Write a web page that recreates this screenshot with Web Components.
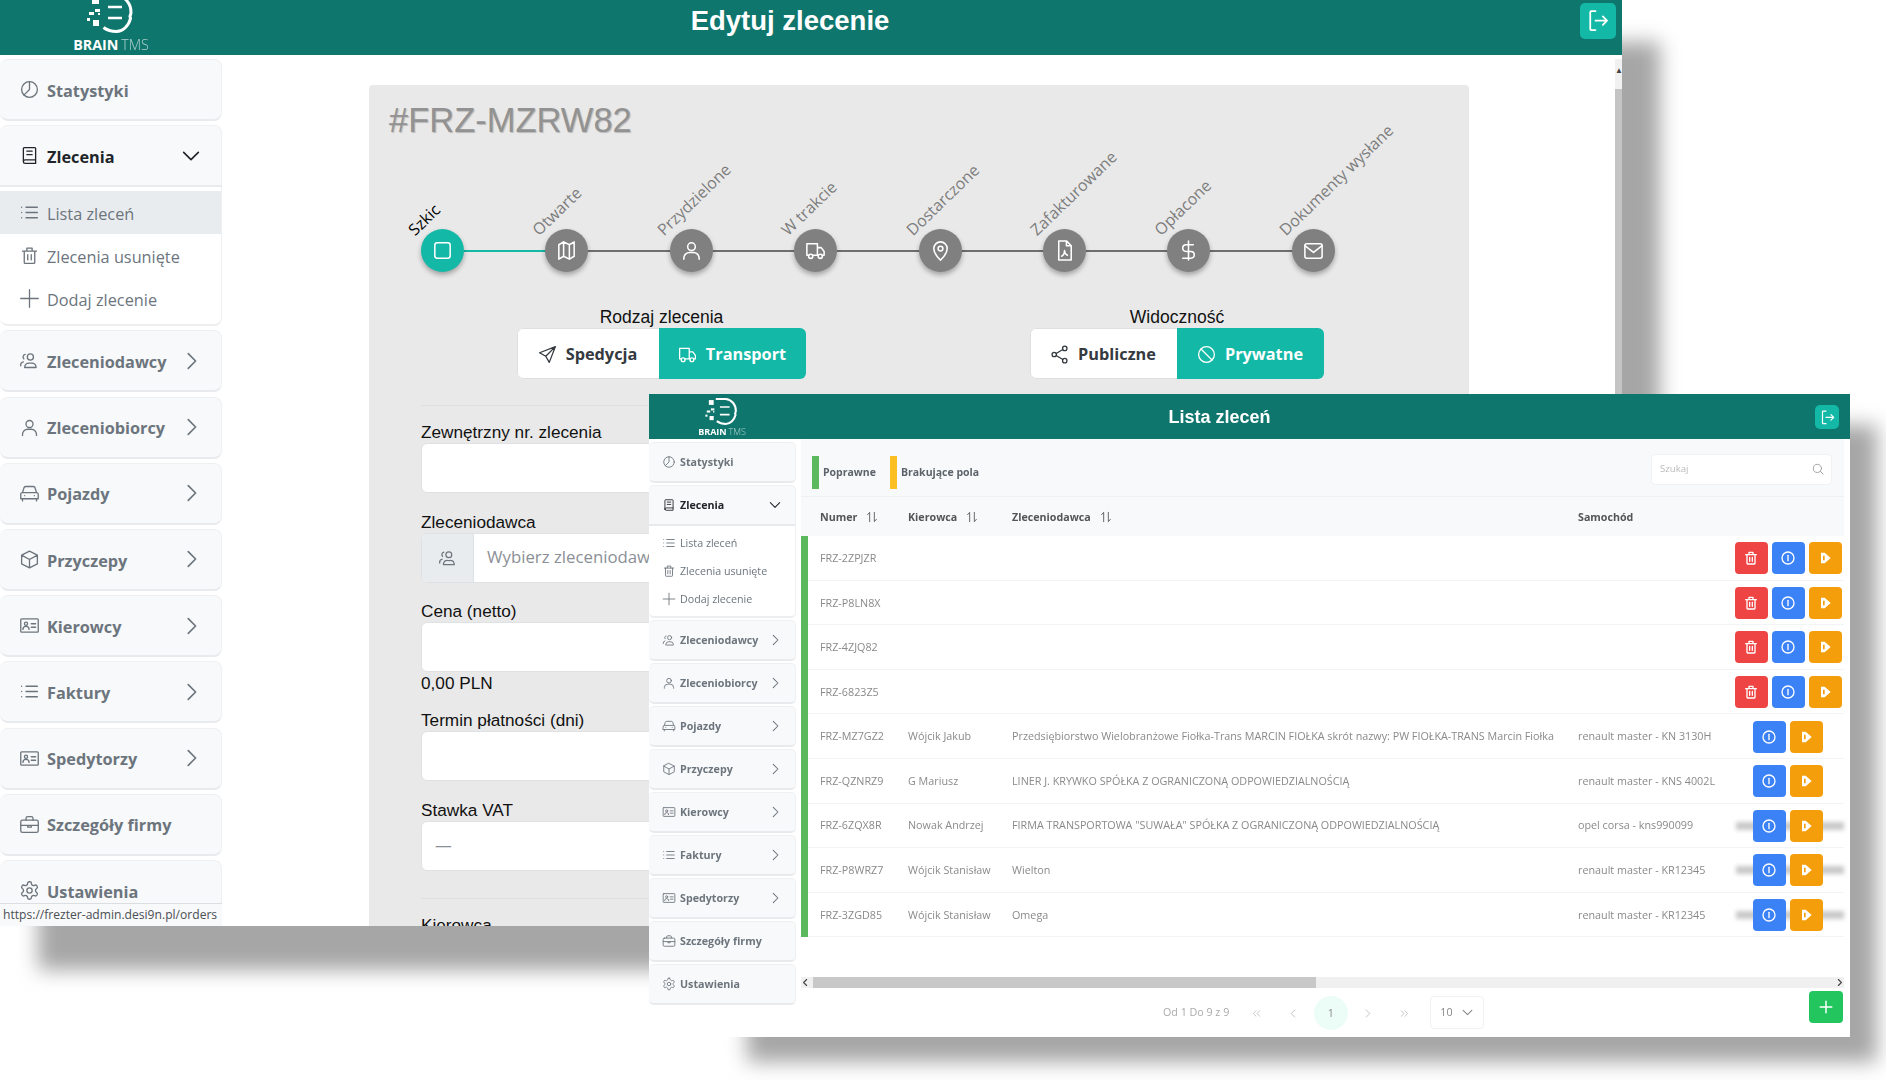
<!DOCTYPE html>
<html lang="pl">
<head>
<meta charset="utf-8">
<title>Brain TMS</title>
<style>
  html, body { margin: 0; padding: 0; background: #fff; }
  body { width: 1886px; height: 1080px; position: relative; overflow: hidden; font-family: "Liberation Sans", sans-serif; }
  #edit-win { left: 0; top: 0; width: 1622px; height: 926px; --shadow-l: 38px; --shadow-t: 42px; --shadow-r: -38px; --shadow-b: -44px;
    --bar-h: 55px; --btn-size: 36px; --btn-top: 3px; --btn-right: 6px; --title-size: 27.500px; --title-h: 42px; --title-gap: 148px;
    --logo-left: 74px; --logo-width: 74px; --logo-top: -6px; --svg-w: 48px; --svg-h: 39px; --logo-font: 14.300px; --logo-gap: 4px; }
  #list-win { left: 649px; top: 394px; width: 1201px; height: 643px; --shadow-l: 98px; --shadow-t: 31px; --shadow-r: -27px; --shadow-b: -25px;
    --bar-h: 45px; --btn-size: 24px; --btn-top: 11px; --btn-right: 11px; --title-size: 18px; --title-h: 46px; --title-gap: 122px;
    --logo-left: 49px; --logo-width: 48px; --logo-top: 4px; --svg-w: 34px; --svg-h: 27px; --logo-font: 9px; --logo-gap: 2px; }
  #edit-nav { --nav-w: 222px; --nav-top: 4px; --item-h: 62px; --item-gap: 4.200px; --sub-h: 43px; --nav-font: 16.300px; --nav-icon: 21px; --nav-left: 19px; --text-gap: 7px; --text-shift: 4px; --chev: 22px; --chev-right: 19px; --nav-radius: 8px; --sub-pad: 4px; --current-bg: #e9ecef; }
  #list-nav { --nav-w: 147px; --nav-top: 3px; --item-h: 41px; --item-gap: 2px; --sub-h: 28px; --nav-font: 10.700px; --nav-icon: 14px; --nav-left: 13px; --text-gap: 4px; --text-shift: 0px; --chev: 14px; --chev-right: 13px; --nav-radius: 5px; --sub-pad: 3px; --current-bg: transparent; }
</style>
</head>
<body>
<tms-window id="edit-win" heading="Edytuj zlecenie">
  <tms-sidebar id="edit-nav" status="https://frezter-admin.desi9n.pl/orders"></tms-sidebar>
  <tms-order-form></tms-order-form>
  <tms-pagescroll></tms-pagescroll>
</tms-window>

<tms-window id="list-win" heading="Lista zleceń" soft>
  <tms-sidebar id="list-nav"></tms-sidebar>
  <tms-order-list></tms-order-list>
</tms-window>

<script>
const ICONS = {
  pie: '<circle cx="12" cy="12" r="9"/><path d="M12 3v9l-6.400 6.400"/>',
  book: '<path d="M5 19V4a1 1 0 0 1 1-1h12a1 1 0 0 1 1 1v17H7a2 2 0 0 1-2-2zm0 0a2 2 0 0 1 2-2h12M9 7h6M9 11h6"/>',
  list: '<path d="M8 6h13M8 12h13M8 18h13M3 6h.01M3 12h.01M3 18h.01"/>',
  trash: '<path d="M4 7h16M9 7V3.500h6V7M6 7v13a1 1 0 0 0 1 1h10a1 1 0 0 0 1-1V7M10 11v6M14 11v6"/>',
  plus: '<path d="M12 2v20M2 12h20"/>',
  users: '<circle cx="13" cy="8" r="3.500"/><path d="M6.500 20v-.5a5 5 0 0 1 5-4.500h3a5 5 0 0 1 5 4.500v.5zM2 18a4 4 0 0 1 3-4.500M7 5a3 3 0 0 0-1.500 5"/>',
  user: '<circle cx="12" cy="8" r="4"/><path d="M4 21v-1a6 6 0 0 1 6-6h4a6 6 0 0 1 6 6v1"/>',
  car: '<path d="M4 11l1.500-5a2.500 2.500 0 0 1 2.400-2h8.200a2.500 2.500 0 0 1 2.400 2L20 11M2 13a2 2 0 0 1 2-2h16a2 2 0 0 1 2 2v5H2zM4 18v2.500M20 18v2.500M6.500 14.500h.01M17.500 14.500h.01"/>',
  box: '<path d="M12 2.500l9 4.500v10l-9 4.500L3 17V7zM3 7l9 5 9-5M12 12v9.500"/>',
  idcard: '<rect x="2" y="4.500" width="20" height="15" rx="1"/><circle cx="8" cy="10" r="1.800"/><path d="M4.500 16.500a3.500 3.500 0 0 1 7 0M14 10h5M14 14h5"/>',
  briefcase: '<rect x="2" y="7" width="20" height="14" rx="2"/><path d="M8 7V5a2 2 0 0 1 2-2h4a2 2 0 0 1 2 2v2M2 13h20M10 13v2h4v-2"/>',
  gear: '<path d="M12.220 2h-.44a2 2 0 0 0-2 2v.18a2 2 0 0 1-1 1.730l-.43.25a2 2 0 0 1-2 0l-.15-.08a2 2 0 0 0-2.730.73l-.22.38a2 2 0 0 0 .73 2.730l.15.1a2 2 0 0 1 1 1.720v.51a2 2 0 0 1-1 1.740l-.15.09a2 2 0 0 0-.73 2.730l.22.38a2 2 0 0 0 2.730.73l.15-.08a2 2 0 0 1 2 0l.43.25a2 2 0 0 1 1 1.730V20a2 2 0 0 0 2 2h.44a2 2 0 0 0 2-2v-.18a2 2 0 0 1 1-1.730l.43-.25a2 2 0 0 1 2 0l.15.08a2 2 0 0 0 2.730-.73l.22-.39a2 2 0 0 0-.73-2.730l-.15-.08a2 2 0 0 1-1-1.740v-.5a2 2 0 0 1 1-1.740l.15-.09a2 2 0 0 0 .73-2.730l-.22-.38a2 2 0 0 0-2.730-.73l-.15.08a2 2 0 0 1-2 0l-.43-.25a2 2 0 0 1-1-1.730V4a2 2 0 0 0-2-2z"/><circle cx="12" cy="12" r="3"/>',
  right: '<path d="M9 4l8 8-8 8"/>',
  down: '<path d="M4 8l8 8 8-8"/>',
  left: '<path d="M15 4l-8 8 8 8"/>',
  first: '<path d="M11 6l-6 6 6 6M19 6l-6 6 6 6"/>',
  last: '<path d="M5 6l6 6-6 6M13 6l6 6-6 6"/>',
  square: '<rect x="4" y="4" width="16" height="16" rx="2.500"/>',
  map: '<path d="M4 6l5-3 6 3 5-3v15l-5 3-6-3-5 3zM9 3v15M15 6v15"/>',
  truck: '<path d="M5 17H3V5h11v12H9M14 9h4l3 4v4h-2M14 17h1"/><circle cx="7" cy="18" r="2.200"/><circle cx="17" cy="18" r="2.200"/>',
  pin: '<path d="M12 22s7-6.500 7-12a7 7 0 1 0-14 0c0 5.500 7 12 7 12z"/><circle cx="12" cy="10" r="2.500"/>',
  filepdf: '<path d="M6 2h8l5 5v15H6zM14 2v5h5M9 18c2-1 3-4 3-6 0 2 1 4 3 5"/>',
  dollar: '<path d="M12 2v20M17 6H9.500a3.500 3.500 0 0 0 0 7h5a3.500 3.500 0 0 1 0 7H6"/>',
  mail: '<rect x="3" y="5" width="18" height="15" rx="2"/><path d="M3 7l9 7 9-7"/>',
  send: '<path d="M21 3L3 10l7 4 4 7zM10 14L21 3"/>',
  share: '<circle cx="18" cy="5" r="2.500"/><circle cx="6" cy="12" r="2.500"/><circle cx="18" cy="19" r="2.500"/><path d="M8.200 10.800l7.600-4.500M8.200 13.200l7.600 4.500"/>',
  ban: '<circle cx="12" cy="12" r="9"/><path d="M5.700 5.700l12.600 12.600"/>',
  logout: '<path d="M10 3H6a1 1 0 0 0-1 1v16a1 1 0 0 0 1 1h4M10 12h11M17 8l4 4-4 4"/>',
  search: '<circle cx="11" cy="11" r="7"/><path d="M21 21l-5-5"/>',
  info: '<circle cx="12" cy="12" r="9"/><path d="M12 8v8"/>',
  go: '<path fill="currentColor" stroke="none" fill-rule="evenodd" d="M6 4h5.500l9 8-9 8H6zM9 8.500v7h2.500v-7z"/>',
  sort: '<path d="M8 20V4L4.500 8M16 4v16l3.500-4"/>'
};

class TmsIcon extends HTMLElement {
  connectedCallback() {
    const name = this.getAttribute('name');
    const weight = this.getAttribute('weight') || '1.5';
    this.attachShadow({ mode: 'open' }).innerHTML = `
      <style>
        :host { display: inline-flex; width: var(--size, 18px); height: var(--size, 18px); flex: none; }
        svg { width: 100%; height: 100%; display: block; fill: none; stroke: currentColor; stroke-linecap: round; stroke-linejoin: round; }
      </style>
      <svg viewBox="0 0 24 24" stroke-width="${weight}">${ICONS[name] || ''}</svg>`;
  }
}
customElements.define('tms-icon', TmsIcon);

class TmsLogo extends HTMLElement {
  connectedCallback() {
    this.attachShadow({ mode: 'open' }).innerHTML = `
      <style>
        :host { display: flex; flex-direction: column; align-items: center; flex: none; width: var(--logo-width); margin: var(--logo-top) 0 0 var(--logo-left); color: #fff; }
        svg { width: var(--svg-w); height: var(--svg-h); display: block; }
        div { margin-top: var(--logo-gap); font: 700 var(--logo-font)/1.1 "Open Sans", sans-serif; white-space: nowrap; }
        span { font-weight: 300; opacity: .65; margin-left: .2em; }
      </style>
      <svg viewBox="0 0 48 39" fill="none" stroke="#fff">
        <path d="M15 1.500h14c9 .5 15 8 15 17 0 2-1 3-1 4 0 1 .5 1 .5 2-2 8-8 13-14 13-5 0-9-1-13-4" stroke-width="3"/>
        <path d="M21 13h14M21 24h14" stroke-width="2.400"/>
        <g fill="#fff" stroke="none">
          <rect x="5" y="3" width="7" height="7"/><rect x="8" y="15" width="5" height="3"/><rect x="2" y="18" width="5" height="3"/>
          <rect x="11" y="19" width="2" height="2"/><rect x="0" y="24" width="3" height="3"/><rect x="6" y="26" width="6" height="6"/>
        </g>
      </svg>
      <div>BRAIN<span>TMS</span></div>`;
  }
}
customElements.define('tms-logo', TmsLogo);

class TmsWindow extends HTMLElement {
  connectedCallback() {
    const heading = this.getAttribute('heading');
    const soft = this.hasAttribute('soft');
    this.attachShadow({ mode: 'open' }).innerHTML = `
      <style>
        :host { display: block; position: absolute; }
        .shade { position: absolute; left: var(--shadow-l); top: var(--shadow-t); right: var(--shadow-r); bottom: var(--shadow-b); background: #a6a6a6; filter: blur(10px); }
        .frame { position: relative; width: 100%; height: 100%; background: #fff; overflow: hidden; display: flex; flex-direction: column; ${soft ? 'filter: blur(.45px);' : ''} }
        header { flex: none; height: var(--bar-h); background: #0f766e; display: flex; align-items: flex-start; overflow: hidden; color: #fff; }
        h1 { flex: 1; margin: 0 var(--title-gap) 0 0; text-align: center; font: 700 var(--title-size)/var(--title-h) "Liberation Sans", sans-serif; }
        button { flex: none; width: var(--btn-size); height: var(--btn-size); margin: var(--btn-top) var(--btn-right) 0 0; padding: 0; border: 0; border-radius: 5px; background: #14b8a6; color: #fff; display: flex; align-items: center; justify-content: center; --size: 70%; }
        .body { flex: 1; min-height: 0; display: flex; position: relative; }
      </style>
      <div class="shade"></div>
      <div class="frame">
        <header>
          <tms-logo></tms-logo>
          <h1>${heading}</h1>
          <button><tms-icon name="logout" weight="1.700"></tms-icon></button>
        </header>
        <div class="body"><slot></slot></div>
      </div>`;
  }
}
customElements.define('tms-window', TmsWindow);

class TmsNavItem extends HTMLElement {
  connectedCallback() {
    const icon = this.getAttribute('icon');
    const label = this.getAttribute('label');
    const chevron = this.getAttribute('chevron');
    const open = chevron === 'down';
    this.attachShadow({ mode: 'open' }).innerHTML = `
      <style>
        :host { display: block; margin-bottom: var(--item-gap); }
        .item { box-sizing: border-box; height: var(--item-h); padding-left: var(--nav-left); display: flex; align-items: center; gap: var(--text-gap);
          background: #f8f9fa; border: 1px solid #eef0f2; border-bottom: 2px solid #e8eaed; border-left: 0; border-radius: var(--nav-radius);
          color: ${open ? '#212529' : '#6c757d'}; font: 700 var(--nav-font)/1.2 "Open Sans", sans-serif; --size: var(--nav-icon); white-space: nowrap; }
        :host([open]) .item { border-radius: var(--nav-radius) var(--nav-radius) 0 0; }
        .label { flex: 1; padding-top: var(--text-shift); }
        .chev { --size: var(--chev); margin-right: var(--chev-right); }
        .sub { background: #fff; border: 1px solid #eef0f2; border-top: 0; border-left: 0; border-bottom: 2px solid #eceef0; border-radius: 0 0 var(--nav-radius) var(--nav-radius); padding: var(--sub-pad) 0; }
        :host(:not([open])) .sub { display: none; }
      </style>
      <div class="item">
        <tms-icon name="${icon}"></tms-icon>
        <span class="label">${label}</span>
        ${chevron ? `<tms-icon class="chev" name="${chevron}" weight="1.800"></tms-icon>` : ''}
      </div>
      <div class="sub"><slot></slot></div>`;
  }
}
customElements.define('tms-nav-item', TmsNavItem);

class TmsNavSub extends HTMLElement {
  connectedCallback() {
    this.attachShadow({ mode: 'open' }).innerHTML = `
      <style>
        :host { display: flex; box-sizing: border-box; height: var(--sub-h); padding-left: var(--nav-left); align-items: center; gap: var(--text-gap); color: #6c757d; font: 400 var(--nav-font)/1.2 "Open Sans", sans-serif; --size: var(--nav-icon); white-space: nowrap; }
        :host([current]) { background: var(--current-bg); }
        span { padding-top: var(--text-shift); }
      </style>
      <tms-icon name="${this.getAttribute('icon')}"></tms-icon>
      <span>${this.getAttribute('label')}</span>`;
  }
}
customElements.define('tms-nav-sub', TmsNavSub);

class TmsSidebar extends HTMLElement {
  connectedCallback() {
    const status = this.getAttribute('status');
    const items = [
      ['pie', 'Statystyki', ''], ['users', 'Zleceniodawcy', 'right'], ['user', 'Zleceniobiorcy', 'right'],
      ['car', 'Pojazdy', 'right'], ['box', 'Przyczepy', 'right'], ['idcard', 'Kierowcy', 'right'],
      ['list', 'Faktury', 'right'], ['idcard', 'Spedytorzy', 'right'], ['briefcase', 'Szczegóły firmy', ''], ['gear', 'Ustawienia', '']
    ];
    const row = ([icon, label, chevron]) => `<tms-nav-item icon="${icon}" label="${label}" ${chevron ? `chevron="${chevron}"` : ''}></tms-nav-item>`;
    this.attachShadow({ mode: 'open' }).innerHTML = `
      <style>
        :host { display: block; position: relative; flex: none; width: var(--nav-w); padding-top: var(--nav-top); overflow: hidden; }
        .bar { position: absolute; left: 0; right: 0; bottom: 0; height: 23px; box-sizing: border-box; background: #f8f9fa; border-top: 1px solid #dcdfe2; color: #4a4f54; font: 400 12.100px/22px "Open Sans", sans-serif; padding-left: 3px; white-space: nowrap; }
      </style>
      ${row(items[0])}
      <tms-nav-item icon="book" label="Zlecenia" chevron="down" open>
        <tms-nav-sub icon="list" label="Lista zleceń" current></tms-nav-sub>
        <tms-nav-sub icon="trash" label="Zlecenia usunięte"></tms-nav-sub>
        <tms-nav-sub icon="plus" label="Dodaj zlecenie"></tms-nav-sub>
      </tms-nav-item>
      ${items.slice(1).map(row).join('')}
      ${status ? `<div class="bar">${status}</div>` : ''}`;
  }
}
customElements.define('tms-sidebar', TmsSidebar);

class TmsStep extends HTMLElement {
  connectedCallback() {
    const done = this.hasAttribute('active');
    const last = this.hasAttribute('last');
    this.attachShadow({ mode: 'open' }).innerHTML = `
      <style>
        :host { display: flex; align-items: center; flex: none; position: relative; }
        .dot { width: 43px; height: 43px; border-radius: 50%; background: ${done ? '#14b8a6' : '#808080'}; color: #fff; display: flex; align-items: center; justify-content: center; box-shadow: 0 3px 5px rgba(0,0,0,.3); --size: 23px; position: relative; z-index: 1; }
        .line { width: 81.400px; height: 2px; background: ${done ? '#14b8a6' : '#6e6e6e'}; }
        .name { position: absolute; left: -17px; top: -4px; transform-origin: 0 0; transform: rotate(-44deg); font: 400 16px/20px "Open Sans", sans-serif; color: ${done ? '#000' : '#7d7d7d'}; white-space: nowrap; }
      </style>
      <span class="name">${this.getAttribute('label')}</span>
      <div class="dot"><tms-icon name="${this.getAttribute('icon')}" weight="1.600"></tms-icon></div>
      ${last ? '' : '<div class="line"></div>'}`;
  }
}
customElements.define('tms-step', TmsStep);

class TmsToggle extends HTMLElement {
  connectedCallback() {
    const parts = this.getAttribute('options').split('|').map(o => o.split(':'));
    const widths = this.getAttribute('widths').split(',');
    this.attachShadow({ mode: 'open' }).innerHTML = `
      <style>
        :host { display: flex; flex-direction: column; align-items: center; flex: none; }
        .cap { font: 400 17.500px/25px "Liberation Sans", sans-serif; color: #111; height: 23px; }
        .group { display: flex; height: 51px; border-radius: 6px; overflow: hidden; box-shadow: 0 0 0 1px #dde0e3 inset; background: #fff; }
        .opt { display: flex; align-items: center; justify-content: center; gap: 8px; font: 700 16.300px/1 "Open Sans", sans-serif; color: #343a40; --size: 21px; padding: 1px 2px 0 0; box-sizing: border-box; }
        .on { background: #14b8a6; color: #fff; }
      </style>
      <div class="cap">${this.getAttribute('label')}</div>
      <div class="group">
        ${parts.map((p, i) => `<div class="opt ${i === 1 ? 'on' : ''}" style="width:${widths[i]}px"><tms-icon name="${p[1]}"></tms-icon>${p[0]}</div>`).join('')}
      </div>`;
  }
}
customElements.define('tms-toggle', TmsToggle);

class TmsField extends HTMLElement {
  connectedCallback() {
    const icon = this.getAttribute('icon');
    const placeholder = this.getAttribute('placeholder');
    const hint = this.getAttribute('hint');
    this.attachShadow({ mode: 'open' }).innerHTML = `
      <style>
        :host { display: block; margin-bottom: ${hint ? 15 : 17.5}px; color: #111; font: 400 17.200px/22px "Liberation Sans", sans-serif; }
        .box { box-sizing: border-box; height: 50px; display: flex; align-items: center; background: #fff; border: 1px solid #dfe2e5; border-radius: 6px; overflow: hidden; }
        .addon { width: 51px; height: 100%; flex: none; background: #e9ecef; border-right: 1px solid #dfe2e5; display: flex; align-items: center; justify-content: center; color: #6c757d; --size: 20px; }
        .ph { color: #8b9096; font: 400 16.800px/1 "Open Sans", sans-serif; white-space: nowrap; padding-left: 13px; }
        .hint { height: 22px; }
      </style>
      <div>${this.getAttribute('label')}</div>
      <div class="box">
        ${icon ? `<div class="addon"><tms-icon name="${icon}"></tms-icon></div>` : ''}
        ${placeholder ? `<span class="ph">${placeholder}</span>` : ''}
      </div>
      ${hint ? `<div class="hint">${hint}</div>` : ''}`;
  }
}
customElements.define('tms-field', TmsField);

class TmsOrderForm extends HTMLElement {
  connectedCallback() {
    const steps = [
      ['Szkic', 'square'], ['Otwarte', 'map'], ['Przydzielone', 'user'], ['W trakcie', 'truck'],
      ['Dostarczone', 'pin'], ['Zafakturowane', 'filepdf'], ['Opłacone', 'dollar'], ['Dokumenty wysłane', 'mail']
    ];
    this.attachShadow({ mode: 'open' }).innerHTML = `
      <style>
        :host { display: block; flex: none; box-sizing: border-box; width: 1100px; margin: 30px 0 0 147px; background: #e9e9e9; border-radius: 4px 4px 0 0; height: 900px; overflow: hidden; }
        h2 { margin: 15px 0 0 20px; font: 400 34.500px/40px "Liberation Sans", sans-serif; color: #929292; text-shadow: 1px 1px 1px rgba(0,0,0,.2); }
        .steps { display: flex; margin: 89px 0 0 52px; }
        .toggles { display: flex; gap: 224px; margin: 33px 0 0 148px; }
        .rows { margin: 26px 39px 0 52px; }
        hr { border: 0; border-top: 1px solid #dfdfdf; margin: 0 0 15px; }
        .end { margin: 27px 0 15px; }
      </style>
      <h2>#FRZ-MZRW82</h2>
      <div class="steps">
        ${steps.map((s, i) => `<tms-step label="${s[0]}" icon="${s[1]}" ${i === 0 ? 'active' : ''} ${i === steps.length - 1 ? 'last' : ''}></tms-step>`).join('')}
      </div>
      <div class="toggles">
        <tms-toggle label="Rodzaj zlecenia" options="Spedycja:send|Transport:truck" widths="142,147"></tms-toggle>
        <tms-toggle label="Widoczność" options="Publiczne:share|Prywatne:ban" widths="147,147"></tms-toggle>
      </div>
      <div class="rows">
        <hr>
        <tms-field label="Zewnętrzny nr. zlecenia"></tms-field>
        <tms-field label="Zleceniodawca" icon="users" placeholder="Wybierz zleceniodawcę"></tms-field>
        <tms-field label="Cena (netto)" hint="0,00 PLN"></tms-field>
        <tms-field label="Termin płatności (dni)"></tms-field>
        <tms-field label="Stawka VAT" placeholder="—"></tms-field>
        <hr class="end">
        <tms-field label="Kierowca"></tms-field>
      </div>`;
  }
}
customElements.define('tms-order-form', TmsOrderForm);

class TmsPagescroll extends HTMLElement {
  connectedCallback() {
    this.attachShadow({ mode: 'open' }).innerHTML = `
      <style>
        :host { display: block; position: absolute; right: 0; top: 4px; bottom: 0; width: 7px; background: #f1f1f1; }
        .arrow { height: 30px; color: #444; font: 8px/24px "Liberation Sans", sans-serif; text-align: center; }
        .thumb { height: 100%; background: #c4c4c4; }
      </style>
      <div class="arrow">▲</div><div class="thumb"></div>`;
  }
}
customElements.define('tms-pagescroll', TmsPagescroll);

class TmsOrderRow extends HTMLElement {
  connectedCallback() {
    const full = this.hasAttribute('deletable');
    const button = (color, icon, weight) => `<button style="background:${color}"><tms-icon name="${icon}" weight="${weight}"></tms-icon></button>`;
    this.attachShadow({ mode: 'open' }).innerHTML = `
      <style>
        :host { display: grid; grid-template-columns: 88px 104px 566px 1fr; box-sizing: border-box; height: 44.600px; padding: 1px 0 0 12px; align-items: center; border-bottom: 1px solid #f3f4f6; color: #8a8a8a; font: 400 10.770px/1 "Open Sans", sans-serif; white-space: nowrap; }
        .end { display: flex; align-items: center; position: relative; padding-right: ${full ? 2 : 21}px; }
        .acts { display: flex; gap: 3.500px; margin-left: auto; position: relative; }
        button { width: 33.500px; height: 32px; padding: 0; border: 0; border-radius: 4px; color: #fff; display: flex; align-items: center; justify-content: center; --size: 16px; }
        .ghost { position: absolute; top: 50%; margin-top: -4px; left: 158px; right: 0; height: 8px; background: #c9c9c9; filter: blur(2px); }
      </style>
      <span>${this.getAttribute('num')}</span>
      <span>${this.getAttribute('driver') || ''}</span>
      <span>${this.getAttribute('client') || ''}</span>
      <div class="end">
        <span>${this.getAttribute('car') || ''}</span>
        ${this.hasAttribute('ghost') ? '<div class="ghost"></div>' : ''}
        <div class="acts">
          ${full ? button('#ef4444', 'trash', 2) : ''}
          ${button('#3b82f6', 'info', 2)}
          ${button('#f59e0b', 'go', 2)}
        </div>
      </div>`;
  }
}
customElements.define('tms-order-row', TmsOrderRow);

class TmsOrderList extends HTMLElement {
  connectedCallback() {
    const pager = ['first', 'left', '1', 'right', 'last'];
    this.attachShadow({ mode: 'open' }).innerHTML = `
      <style>
        :host { display: flex; flex-direction: column; flex: none; width: 1043px; margin-left: 5px; font-family: "Open Sans", sans-serif; }
        .tools { box-sizing: border-box; height: 58px; flex: none; background: #f8f9fa; border-bottom: 1px solid #eef0f2; display: flex; align-items: center; padding: 0 12px 0 11px; font: 700 10.500px/1 "Open Sans", sans-serif; color: #5c636a; }
        .key { display: flex; align-items: center; gap: 4px; margin: 9px 14px 0 0; }
        .key i { display: block; width: 7px; height: 33px; }
        .search { margin: 3px 0 0 auto; width: 181px; height: 31px; box-sizing: border-box; background: #fff; border-radius: 4px; border: 1px solid #f1f2f4; display: flex; align-items: center; justify-content: space-between; padding: 0 6px 0 8px; color: #bbb; font: 400 9.600px/1 "Open Sans", sans-serif; --size: 14px; }
        .search tms-icon { color: #999; }
        .head { box-sizing: border-box; height: 39px; flex: none; background: #f8f9fa; display: grid; grid-template-columns: 88px 104px 566px 1fr; padding: 1px 0 0 19px; align-items: center; font: 700 10.700px/1 "Open Sans", sans-serif; color: #555; white-space: nowrap; }
        .head div { display: flex; align-items: center; gap: 8px; --size: 14px; }
        .body { flex: none; border-left: 7px solid #5cb85c; }
        .hbar { flex: none; height: 11px; margin-top: 40px; background: #f0f0f0; position: relative; display: flex; align-items: center; justify-content: space-between; color: #444; --size: 9px; }
        .hbar b { position: absolute; left: 12px; top: 0; height: 100%; width: 503px; background: #c8c8c8; }
        .foot { flex: 1; display: flex; align-items: flex-start; font: 400 10.700px/1 "Open Sans", sans-serif; color: #aaa; }
        .range { margin: 19px 9px 0 362px; white-space: nowrap; }
        .pg { width: 34px; height: 34px; margin: 8px 1.500px 0; border-radius: 50%; display: flex; align-items: center; justify-content: center; color: #aaa; --size: 11px; }
        .pg.on { background: #ecfdf8; color: #888; }
        .size { box-sizing: border-box; width: 54px; height: 33px; margin: 8px 0 0 7px; border: 1px solid #f0f1f3; border-radius: 4px; display: flex; align-items: center; justify-content: space-between; padding: 0 9px; color: #888; --size: 13px; }
        .add { width: 34px; height: 32px; margin: 3px 1px 0 auto; padding: 0; border: 0; border-radius: 4px; background: #22c55e; color: #fff; display: flex; align-items: center; justify-content: center; --size: 14px; }
      </style>
      <div class="tools">
        <div class="key"><i style="background:#5cb85c"></i>Poprawne</div>
        <div class="key"><i style="background:#fbbf24"></i>Brakujące pola</div>
        <div class="search">Szukaj<tms-icon name="search"></tms-icon></div>
      </div>
      <div class="head">
        <div>Numer<tms-icon name="sort"></tms-icon></div>
        <div>Kierowca<tms-icon name="sort"></tms-icon></div>
        <div>Zleceniodawca<tms-icon name="sort"></tms-icon></div>
        <div>Samochód</div>
      </div>
      <div class="body">
        <tms-order-row num="FRZ-2ZPJZR" deletable></tms-order-row>
        <tms-order-row num="FRZ-P8LN8X" deletable></tms-order-row>
        <tms-order-row num="FRZ-4ZJQ82" deletable></tms-order-row>
        <tms-order-row num="FRZ-6823Z5" deletable></tms-order-row>
        <tms-order-row num="FRZ-MZ7GZ2" driver="Wójcik Jakub" client="Przedsiębiorstwo Wielobranżowe Fiołka-Trans MARCIN FIOŁKA skrót nazwy: PW FIOŁKA-TRANS Marcin Fiołka" car="renault master - KN 3130H"></tms-order-row>
        <tms-order-row num="FRZ-QZNRZ9" driver="G Mariusz" client="LINER J. KRYWKO SPÓŁKA Z OGRANICZONĄ ODPOWIEDZIALNOŚCIĄ" car="renault master - KNS 4002L"></tms-order-row>
        <tms-order-row num="FRZ-6ZQX8R" driver="Nowak Andrzej" client="FIRMA TRANSPORTOWA &quot;SUWAŁA&quot; SPÓŁKA Z OGRANICZONĄ ODPOWIEDZIALNOŚCIĄ" car="opel corsa - kns990099" ghost></tms-order-row>
        <tms-order-row num="FRZ-P8WRZ7" driver="Wójcik Stanisław" client="Wielton" car="renault master - KR12345" ghost></tms-order-row>
        <tms-order-row num="FRZ-3ZGD85" driver="Wójcik Stanisław" client="Omega" car="renault master - KR12345" ghost></tms-order-row>
      </div>
      <div class="hbar"><tms-icon name="left" weight="3"></tms-icon><b></b><tms-icon name="right" weight="3"></tms-icon></div>
      <div class="foot">
        <span class="range">Od 1 Do 9 z 9</span>
        ${pager.map(p => p === '1' ? '<div class="pg on">1</div>' : `<div class="pg"><tms-icon name="${p}"></tms-icon></div>`).join('')}
        <div class="size">10<tms-icon name="down" weight="2"></tms-icon></div>
        <button class="add"><tms-icon name="plus" weight="2.500"></tms-icon></button>
      </div>`;
  }
}
customElements.define('tms-order-list', TmsOrderList);
</script>
</body>
</html>
